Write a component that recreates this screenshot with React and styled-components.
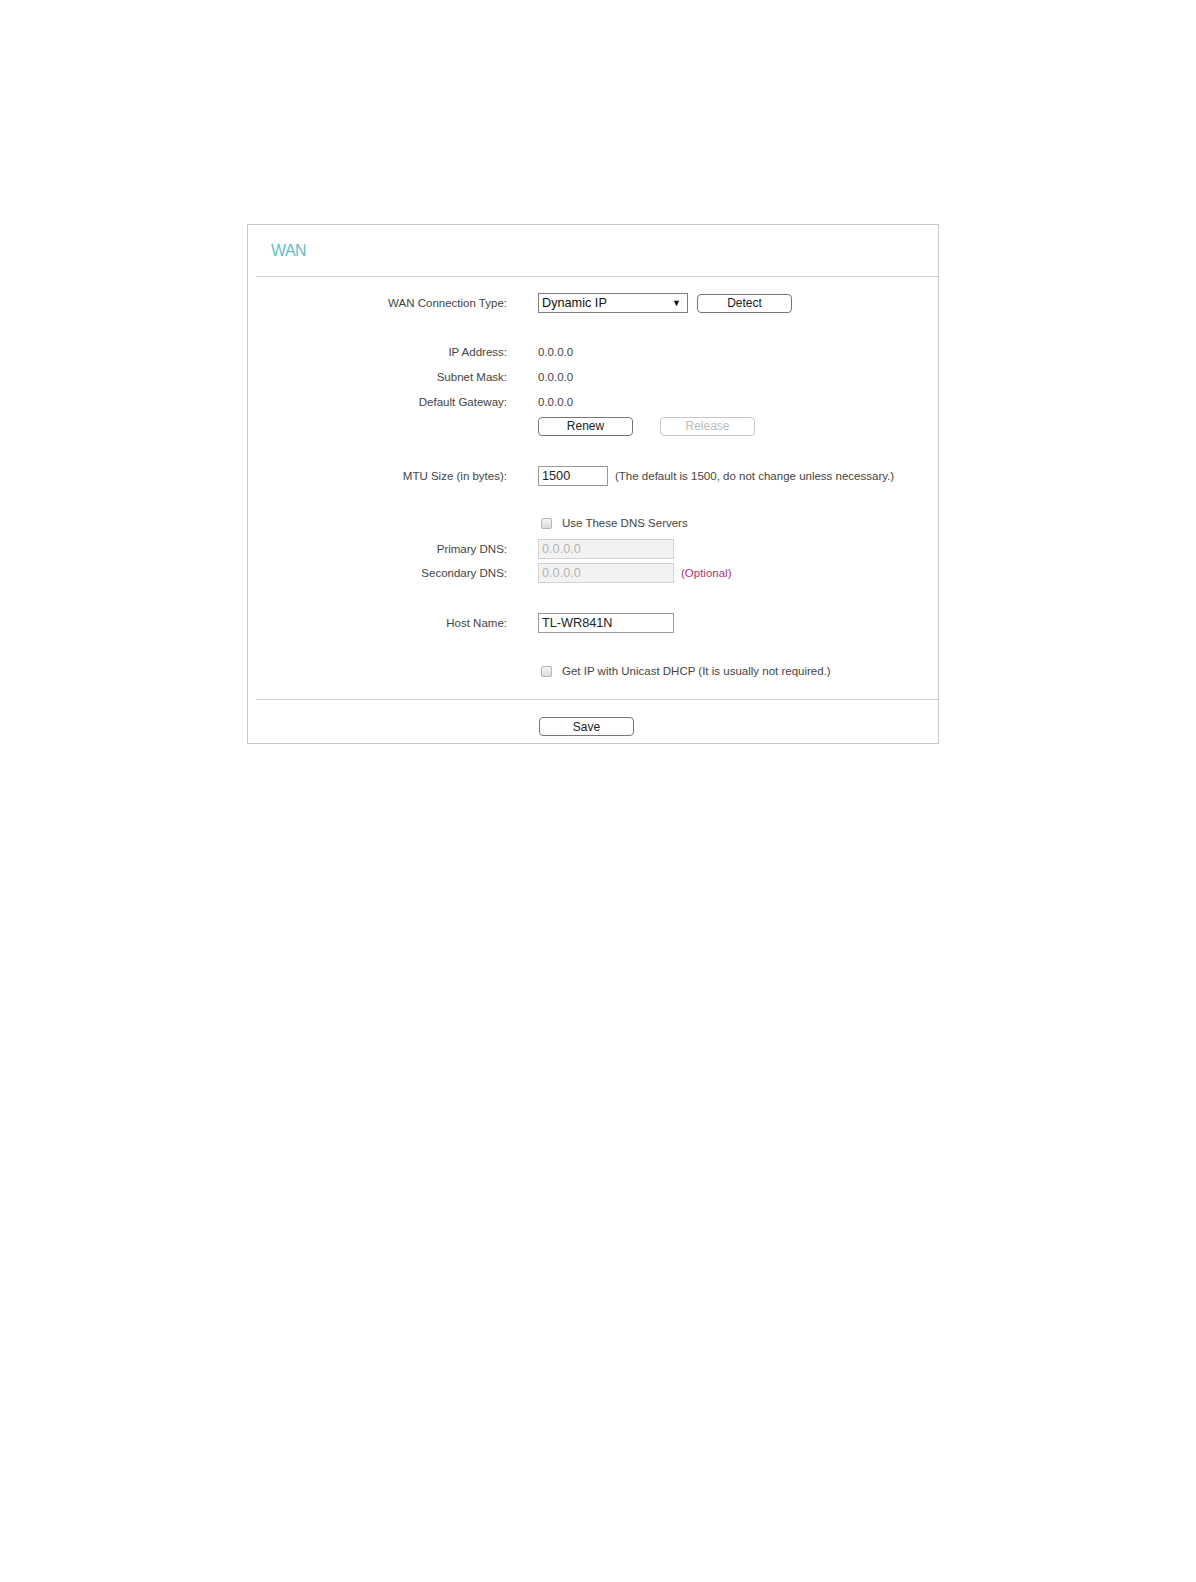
import React from 'react'
import styled, { createGlobalStyle } from 'styled-components'

const GlobalStyle = createGlobalStyle`
  body {
    margin: 0;
    background: #fff;
    font-family: "Liberation Sans", Arial, sans-serif;
  }
`

const Page = styled.div`
  padding: 224px 0 0 247px;
  min-height: 1582px;
  box-sizing: border-box;
`

const Panel = styled.div`
  width: 692px;
  border: 1px solid #c9c9c9;
  box-sizing: border-box;
`

const Header = styled.div`
  height: 51px;
  display: flex;
  align-items: center;
  padding-left: 23px;
  color: #5cc1cb;
  font-size: 16px;
  letter-spacing: -0.6px;
`

const Divider = styled.div`
  height: 1px;
  margin-left: 8px;
  background: #cfcfcf;
`

const Body = styled.div`
  padding: 0 0 16px;
`

const Row = styled.div`
  display: flex;
  align-items: center;
  height: 24px;
  margin-top: ${p => p.$mt || 0}px;
  font-size: 11.5px;
  color: #444;
`

const Label = styled.div`
  width: 259px;
  flex: none;
  text-align: right;
  padding-right: 31px;
  color: #444;
`

const Value = styled.div`
  color: #444;
`

const Select = styled.div`
  width: 150px;
  height: 20px;
  box-sizing: border-box;
  border: 1px solid #7d7d7d;
  display: flex;
  align-items: center;
  justify-content: space-between;
  padding: 0 6px 0 3px;
  font-size: 12.7px;
  color: #111;
`

const Arrow = styled.span`
  font-size: 9px;
  color: #111;
`

const Button = styled.div`
  width: 95px;
  height: 19px;
  box-sizing: border-box;
  border: 1px solid ${p => (p.$disabled ? '#c6c6c6' : '#777')};
  border-radius: 4px;
  margin-left: ${p => p.$ml || 0}px;
  display: flex;
  align-items: center;
  justify-content: center;
  font-size: 12px;
  color: ${p => (p.$disabled ? '#bdbdbd' : '#222')};
  background: #fff;
`

const Input = styled.div`
  width: ${p => p.$w}px;
  height: 20px;
  box-sizing: border-box;
  border: 1px solid ${p => (p.$disabled ? '#d2d2d2' : '#9a9a9a')};
  background: ${p => (p.$disabled ? '#f2f2f2' : '#fff')};
  color: ${p => (p.$disabled ? '#b3b3b3' : '#222')};
  display: flex;
  align-items: center;
  padding-left: 3px;
  font-size: 12.7px;
`

const Note = styled.span`
  margin-left: 7px;
  color: ${p => p.$color || '#444'};
`

const Check = styled.span`
  width: 11px;
  height: 11px;
  margin-left: 3px;
  margin-right: 10px;
  box-sizing: border-box;
  border: 1px solid #b5b5b5;
  border-radius: 2px;
  background: linear-gradient(#f4f4f4, #dcdcdc);
`

const Footer = styled.div`
  padding: 17px 0 7px 291px;
`

export default function App() {
  return (
    <Page>
      <GlobalStyle />
      <Panel>
        <Header>WAN</Header>
        <Divider />
        <Body>
          <Row $mt={14}>
            <Label>WAN Connection Type:</Label>
            <Select>
              <span>Dynamic IP</span>
              <Arrow>▼</Arrow>
            </Select>
            <Button $ml={9}>Detect</Button>
          </Row>
          <Row $mt={25}>
            <Label>IP Address:</Label>
            <Value>0.0.0.0</Value>
          </Row>
          <Row $mt={1}>
            <Label>Subnet Mask:</Label>
            <Value>0.0.0.0</Value>
          </Row>
          <Row $mt={1}>
            <Label>Default Gateway:</Label>
            <Value>0.0.0.0</Value>
          </Row>
          <Row>
            <Label />
            <Button>Renew</Button>
            <Button $ml={27} $disabled>Release</Button>
          </Row>
          <Row $mt={26}>
            <Label>MTU Size (in bytes):</Label>
            <Input $w={70}>1500</Input>
            <Note>(The default is 1500, do not change unless necessary.)</Note>
          </Row>
          <Row $mt={23}>
            <Label />
            <Check />
            <span>Use These DNS Servers</span>
          </Row>
          <Row $mt={2}>
            <Label>Primary DNS:</Label>
            <Input $w={136} $disabled>0.0.0.0</Input>
          </Row>
          <Row>
            <Label>Secondary DNS:</Label>
            <Input $w={136} $disabled>0.0.0.0</Input>
            <Note $color="#b2336e">(Optional)</Note>
          </Row>
          <Row $mt={26}>
            <Label>Host Name:</Label>
            <Input $w={136}>TL-WR841N</Input>
          </Row>
          <Row $mt={24}>
            <Label />
            <Check />
            <span>Get IP with Unicast DHCP (It is usually not required.)</span>
          </Row>
        </Body>
        <Divider />
        <Footer>
          <Button>Save</Button>
        </Footer>
      </Panel>
    </Page>
  )
}
